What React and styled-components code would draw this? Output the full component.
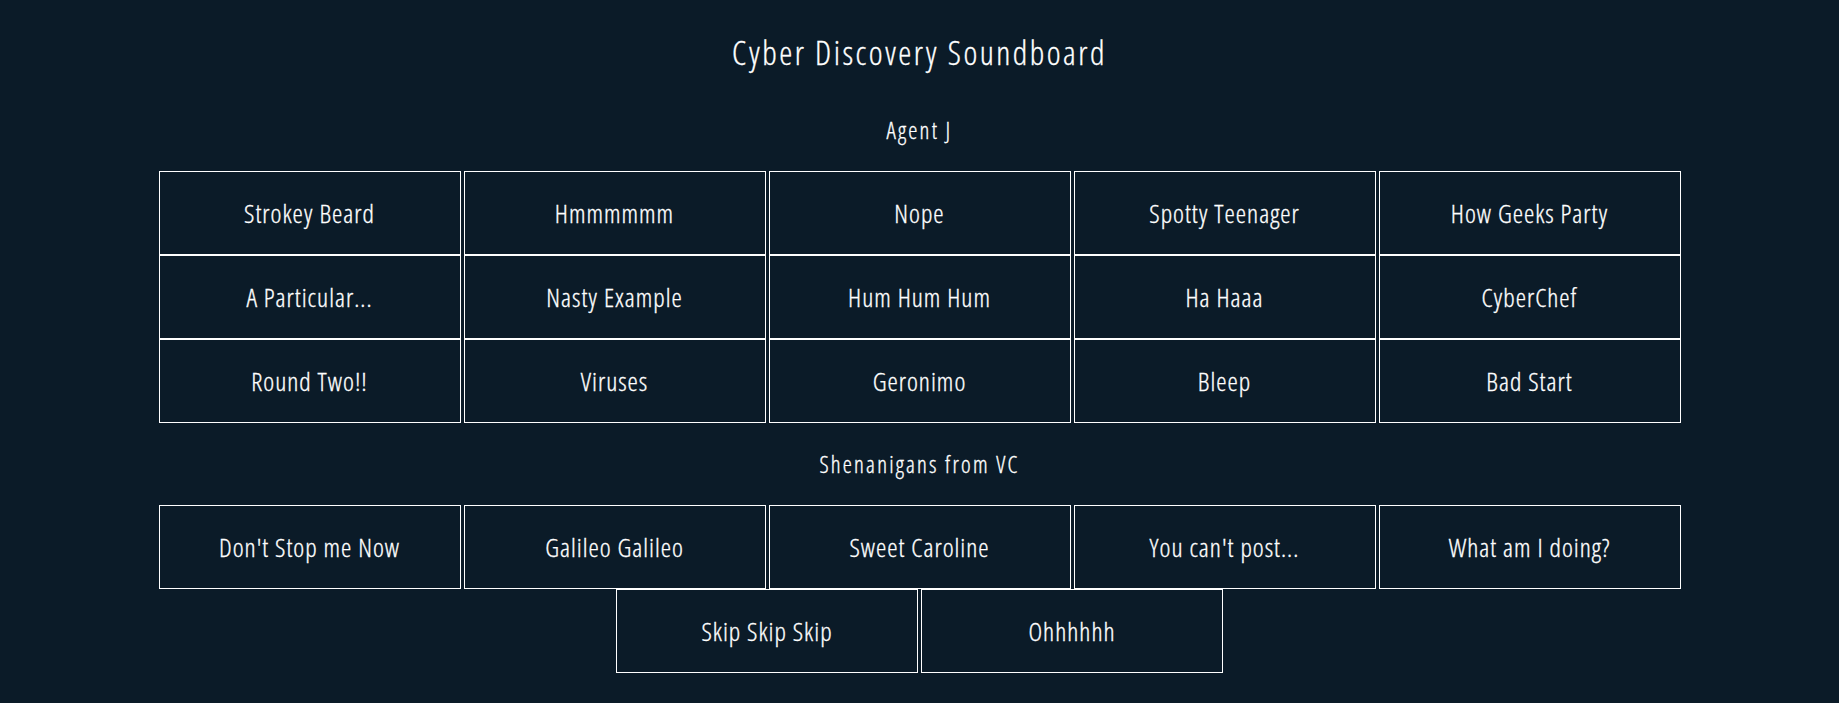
import React from "react";
import styled, { createGlobalStyle } from "styled-components";

const GlobalStyle = createGlobalStyle`
  html, body {
    margin: 0;
    padding: 0;
    background: #0b1b28;
  }
  body {
    color: #ffffff;
    font-family: "Open Sans", "Liberation Sans", sans-serif;
    font-stretch: condensed;
    font-weight: 300;
    -webkit-text-stroke: 0.3px #ffffff;
  }
`;

const Page = styled.div`
  display: flex;
  flex-direction: column;
  align-items: center;
  padding-top: 33px;
`;

const Title = styled.h1`
  margin: 0 0 16px;
  font-size: 33px;
  line-height: 40px;
  font-weight: 300;
  letter-spacing: 2.5px;
  text-align: center;
`;

const Section = styled.section`
  display: flex;
  flex-direction: column;
  align-items: center;
  padding-top: 26px;
`;

const SectionTitle = styled.h2`
  margin: 0 0 26px;
  font-size: 23px;
  line-height: 30px;
  font-weight: 300;
  letter-spacing: 2.2px;
  text-align: center;
`;

const Board = styled.div`
  display: flex;
  flex-wrap: wrap;
  justify-content: center;
  column-gap: 3px;
  row-gap: 0;
  width: 1522px;
`;

const SoundButton = styled.button`
  display: flex;
  align-items: center;
  justify-content: center;
  box-sizing: border-box;
  width: 302px;
  height: 84px;
  padding: 0;
  background: transparent;
  border: 1px solid #ffffff;
  color: #ffffff;
  font-family: inherit;
  font-stretch: condensed;
  font-weight: 300;
  font-size: 26px;
  letter-spacing: 1px;
  -webkit-text-stroke: 0.3px #ffffff;
  cursor: pointer;

  &:hover {
    background: rgba(255, 255, 255, 0.06);
  }
`;

const sections = [
  {
    name: "Agent J",
    sounds: [
      "Strokey Beard",
      "Hmmmmmm",
      "Nope",
      "Spotty Teenager",
      "How Geeks Party",
      "A Particular...",
      "Nasty Example",
      "Hum Hum Hum",
      "Ha Haaa",
      "CyberChef",
      "Round Two!!",
      "Viruses",
      "Geronimo",
      "Bleep",
      "Bad Start",
    ],
  },
  {
    name: "Shenanigans from VC",
    sounds: [
      "Don't Stop me Now",
      "Galileo Galileo",
      "Sweet Caroline",
      "You can't post...",
      "What am I doing?",
      "Skip Skip Skip",
      "Ohhhhhh",
    ],
  },
];

const App = () => {
  return (
    <>
      <GlobalStyle />
      <Page>
        <Title>Cyber Discovery Soundboard</Title>
        {sections.map((section) => (
          <Section key={section.name}>
            <SectionTitle>{section.name}</SectionTitle>
            <Board>
              {section.sounds.map((sound) => (
                <SoundButton key={sound}>{sound}</SoundButton>
              ))}
            </Board>
          </Section>
        ))}
      </Page>
    </>
  );
};

export default App;
